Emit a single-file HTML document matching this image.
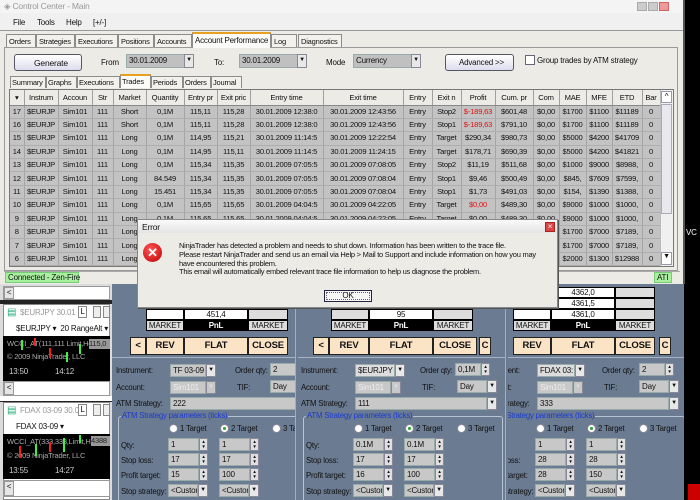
<!DOCTYPE html>
<html><head><meta charset="utf-8"><style>
*{margin:0;padding:0;box-sizing:border-box}
body{width:700px;height:500px;overflow:hidden;position:relative;background:#6b7b92;font-family:"Liberation Sans",sans-serif;font-size:8px;color:#111;letter-spacing:-0.2px}
.a{position:absolute}
.t{position:absolute;white-space:nowrap}
#main{left:0;top:0;width:685px;height:284px;background:#ecebe6;border-right:2px solid #555}
.tab{position:absolute;top:34px;height:13px;border:1px solid #8c8c8c;border-bottom:none;background:#f2f1ec;padding:2px 2px 0;font-size:7.5px;overflow:hidden;white-space:nowrap}
.stab{position:absolute;top:76px;height:12px;border:1px solid #8c8c8c;border-bottom:none;background:#f2f1ec;padding:1px 1px 0;font-size:7.5px;overflow:hidden;white-space:nowrap}
table{border-collapse:collapse;table-layout:fixed;position:absolute;left:10px;top:90px;font-size:7.6px}
td{height:13.4px;border-right:1px solid #a5a5a5;border-bottom:1px solid #aeaeae;background:#c3c3c3;white-space:nowrap;overflow:hidden;text-align:center;padding:0;line-height:12px}
th{height:15px;font-weight:normal;background:#ecebe6;border-right:1px solid #a0a0a0;border-bottom:1px solid #888;white-space:nowrap;overflow:hidden;text-align:center;font-size:7.6px}
.r{color:#e01010}
.pan{position:absolute;top:284px;height:216px;overflow:hidden}
.cell{position:absolute;height:11px;border:1px solid #000;text-align:center;font-size:8px;line-height:9px}
.btn{position:absolute;top:337px;height:18px;background:#fbe4c6;border:1px solid #222;text-align:center;font-weight:bold;font-size:9.5px;line-height:16px}
.lbl{position:absolute;color:#111;font-size:7.8px;white-space:nowrap}
.in{position:absolute;height:13px;background:#c8c8c8;border:1px solid #9aa;font-size:8px;padding-left:2px;line-height:11px;white-space:nowrap;overflow:hidden}
.dd{position:absolute;height:13px;width:10px;background:#e8e8e8;border:1px solid #889;font-size:6px;text-align:center;line-height:11px}
.sp{position:absolute;height:13px;width:9px;background:#e0e0e0;border:1px solid #889;font-size:4.5px;line-height:5px;text-align:center}
.rad{position:absolute;width:9px;height:9px;border-radius:50%;background:#fff;border:1px solid #889}
.win{position:absolute;left:3px;width:107px;background:#fff}
.chart{position:absolute;left:3px;width:107px;background:#000;overflow:hidden}
</style></head><body>

<div class="a" style="left:684px;top:0;width:16px;height:500px;background:#000"></div>
<div class="a" style="left:686px;top:228px;width:14px;height:12px;color:#fff;font-size:8px">VC</div>
<div class="a" style="left:688px;top:484px;width:12px;height:16px;background:#c00"></div>

<div id="main" class="a">
 <div class="a" style="left:0;top:0;width:683px;height:13px;background:#f4f4f4"></div>
 <div class="t" style="left:4px;top:1px;color:#999;font-size:8.5px">&#9672; Control Center - Main</div>
 <div class="a" style="left:637px;top:2px;width:10px;height:9px;background:#ccc;border:1px solid #aaa"></div>
 <div class="a" style="left:648px;top:2px;width:10px;height:9px;background:#ccc;border:1px solid #aaa"></div>
 <div class="a" style="left:659px;top:2px;width:10px;height:9px;background:#e99;border:1px solid #c66"></div>
 <div class="a" style="left:0;top:13px;width:683px;height:18px;background:#f0f0f0;border-bottom:1px solid #999"></div>
 <div class="t" style="left:13px;top:18px">File</div><div class="t" style="left:37px;top:18px">Tools</div><div class="t" style="left:66px;top:18px">Help</div><div class="t" style="left:93px;top:18px">[+/-]</div>
 <div class="a" style="left:4px;top:47px;width:674px;height:224px;background:#ecebe6;border:1px solid #999"></div>
 <div class="tab" style="left:6px;width:30px">Orders</div>
 <div class="tab" style="left:36px;width:39px">Strategies</div>
 <div class="tab" style="left:75px;width:43px">Executions</div>
 <div class="tab" style="left:118px;width:36px">Positions</div>
 <div class="tab" style="left:154px;width:38px">Accounts</div>
 <div class="tab" style="left:192px;top:32px;height:16px;width:79px;background:#fbfbf8;border-top:2px solid #e8a020;font-size:8px">Account Performance</div>
 <div class="tab" style="left:271px;width:26px">Log</div>
 <div class="tab" style="left:298px;width:44px">Diagnostics</div>
 <div class="a" style="left:14px;top:54px;width:68px;height:17px;border:1px solid #556;border-radius:3px;background:linear-gradient(#fff,#dde)"><div class="t" style="left:19px;top:3px;font-size:8.5px">Generate</div></div>
 <div class="t" style="left:101px;top:58px">From</div>
 <div class="in" style="left:126px;top:54px;width:60px;height:14px;background:#c0c0c0">30.01.2009</div><div class="dd" style="left:184px;top:54px;height:14px">&#9660;</div>
 <div class="t" style="left:214px;top:58px">To:</div>
 <div class="in" style="left:239px;top:54px;width:60px;height:14px;background:#c0c0c0">30.01.2009</div><div class="dd" style="left:297px;top:54px;height:14px">&#9660;</div>
 <div class="t" style="left:326px;top:58px">Mode</div>
 <div class="in" style="left:353px;top:54px;width:60px;height:14px;background:#c0c0c0">Currency</div><div class="dd" style="left:411px;top:54px;height:14px">&#9660;</div>
 <div class="a" style="left:445px;top:54px;width:69px;height:17px;border:1px solid #556;border-radius:3px;background:linear-gradient(#fff,#dde)"><div class="t" style="left:13px;top:3px;font-size:8px">Advanced &gt;&gt;</div></div>
 <div class="a" style="left:525px;top:55px;width:10px;height:10px;background:#fff;border:1px solid #667"></div>
 <div class="t" style="left:537px;top:56px">Group trades by ATM strategy</div>
 <div class="stab" style="left:10px;width:36px">Summary</div>
 <div class="stab" style="left:46px;width:31px">Graphs</div>
 <div class="stab" style="left:77px;width:43px">Executions</div>
 <div class="stab" style="left:120px;top:74px;height:14px;width:31px;background:#fbfbf8;border-top:2px solid #e8a020">Trades</div>
 <div class="stab" style="left:151px;width:32px">Periods</div>
 <div class="stab" style="left:183px;width:28px">Orders</div>
 <div class="stab" style="left:211px;width:31px">Journal</div>
 <div class="a" style="left:9px;top:89px;width:665px;height:178px;border:1px solid #777;background:#c3c3c3"></div>
 <table>
 <colgroup><col style="width:14px"><col style="width:34px"><col style="width:34px"><col style="width:21px"><col style="width:33px"><col style="width:38px"><col style="width:33px"><col style="width:33px"><col style="width:73px"><col style="width:80px"><col style="width:29px"><col style="width:29px"><col style="width:34px"><col style="width:38px"><col style="width:26px"><col style="width:27px"><col style="width:26px"><col style="width:30px"><col style="width:18px"></colgroup>
 <tr><th>&#9662;</th><th>Instrum</th><th>Accoun</th><th>Str</th><th>Market</th><th>Quantity</th><th>Entry pr</th><th>Exit pric</th><th>Entry time</th><th>Exit time</th><th>Entry</th><th>Exit n</th><th>Profit</th><th>Cum. pr</th><th>Com</th><th>MAE</th><th>MFE</th><th>ETD</th><th>Bar</th></tr>
 <tr><td>17</td><td>$EURJP</td><td>Sim101</td><td>111</td><td>Short</td><td>0,1M</td><td>115,11</td><td>115,28</td><td>30.01.2009 12:38:0</td><td>30.01.2009 12:43:56</td><td>Entry</td><td>Stop2</td><td class="r">$-189,63</td><td>$601,48</td><td>$0,00</td><td>$1700</td><td>$1100</td><td>$11189</td><td>0</td></tr>
 <tr><td>16</td><td>$EURJP</td><td>Sim101</td><td>111</td><td>Short</td><td>0,1M</td><td>115,11</td><td>115,28</td><td>30.01.2009 12:38:0</td><td>30.01.2009 12:43:56</td><td>Entry</td><td>Stop1</td><td class="r">$-189,63</td><td>$791,10</td><td>$0,00</td><td>$1700</td><td>$1100</td><td>$11189</td><td>0</td></tr>
 <tr><td>15</td><td>$EURJP</td><td>Sim101</td><td>111</td><td>Long</td><td>0,1M</td><td>114,95</td><td>115,21</td><td>30.01.2009 11:14:5</td><td>30.01.2009 12:22:54</td><td>Entry</td><td>Target</td><td>$290,34</td><td>$980,73</td><td>$0,00</td><td>$5000</td><td>$4200</td><td>$41709</td><td>0</td></tr>
 <tr><td>14</td><td>$EURJP</td><td>Sim101</td><td>111</td><td>Long</td><td>0,1M</td><td>114,95</td><td>115,11</td><td>30.01.2009 11:14:5</td><td>30.01.2009 11:24:15</td><td>Entry</td><td>Target</td><td>$178,71</td><td>$690,39</td><td>$0,00</td><td>$5000</td><td>$4200</td><td>$41821</td><td>0</td></tr>
 <tr><td>13</td><td>$EURJP</td><td>Sim101</td><td>111</td><td>Long</td><td>0,1M</td><td>115,34</td><td>115,35</td><td>30.01.2009 07:05:5</td><td>30.01.2009 07:08:05</td><td>Entry</td><td>Stop2</td><td>$11,19</td><td>$511,68</td><td>$0,00</td><td>$1000</td><td>$9000</td><td>$8988,</td><td>0</td></tr>
 <tr><td>12</td><td>$EURJP</td><td>Sim101</td><td>111</td><td>Long</td><td>84.549</td><td>115,34</td><td>115,35</td><td>30.01.2009 07:05:5</td><td>30.01.2009 07:08:04</td><td>Entry</td><td>Stop1</td><td>$9,46</td><td>$500,49</td><td>$0,00</td><td>$845,</td><td>$7609</td><td>$7599,</td><td>0</td></tr>
 <tr><td>11</td><td>$EURJP</td><td>Sim101</td><td>111</td><td>Long</td><td>15.451</td><td>115,34</td><td>115,35</td><td>30.01.2009 07:05:5</td><td>30.01.2009 07:08:04</td><td>Entry</td><td>Stop1</td><td>$1,73</td><td>$491,03</td><td>$0,00</td><td>$154,</td><td>$1390</td><td>$1388,</td><td>0</td></tr>
 <tr><td>10</td><td>$EURJP</td><td>Sim101</td><td>111</td><td>Long</td><td>0,1M</td><td>115,65</td><td>115,65</td><td>30.01.2009 04:04:5</td><td>30.01.2009 04:22:05</td><td>Entry</td><td>Target</td><td class="r">$0,00</td><td>$489,30</td><td>$0,00</td><td>$9000</td><td>$1000</td><td>$1000,</td><td>0</td></tr>
 <tr><td>9</td><td>$EURJP</td><td>Sim101</td><td>111</td><td>Long</td><td>0,1M</td><td>115,65</td><td>115,65</td><td>30.01.2009 04:04:5</td><td>30.01.2009 04:22:05</td><td>Entry</td><td>Target</td><td>$0,00</td><td>$489,30</td><td>$0,00</td><td>$9000</td><td>$1000</td><td>$1000,</td><td>0</td></tr>
 <tr><td>8</td><td>$EURJP</td><td>Sim101</td><td>111</td><td>Long</td><td>0,1M</td><td>115,65</td><td>115,65</td><td>30.01.2009 04:04:5</td><td>30.01.2009 04:22:05</td><td>Entry</td><td>Target</td><td>$0,00</td><td>$489,30</td><td>$0,00</td><td>$1700</td><td>$7000</td><td>$7189,</td><td>0</td></tr>
 <tr><td>7</td><td>$EURJP</td><td>Sim101</td><td>111</td><td>Long</td><td>0,1M</td><td>115,65</td><td>115,65</td><td>30.01.2009 04:04:5</td><td>30.01.2009 04:22:05</td><td>Entry</td><td>Target</td><td>$0,00</td><td>$489,30</td><td>$0,00</td><td>$1700</td><td>$7000</td><td>$7189,</td><td>0</td></tr>
 <tr><td>6</td><td>$EURJP</td><td>Sim101</td><td>111</td><td>Long</td><td>0,1M</td><td>115,65</td><td>115,65</td><td>30.01.2009 04:04:5</td><td>30.01.2009 04:22:05</td><td>Entry</td><td>Target</td><td>$0,00</td><td>$489,30</td><td>$0,00</td><td>$2000</td><td>$1300</td><td>$12988</td><td>0</td></tr>
 </table>
 <div class="a" style="left:660px;top:90px;width:13px;height:176px;background:#f0f0f0;border-left:1px solid #bbb"></div>
 <div class="a" style="left:661px;top:91px;width:11px;height:12px;background:#fff;border:1px solid #99a;font-size:8px;text-align:center">^</div>
 <div class="a" style="left:661px;top:104px;width:11px;height:110px;background:#e8e8ee;border:1px solid #aab"></div>
 <div class="a" style="left:661px;top:252px;width:11px;height:13px;background:#fff;border:1px solid #99a;font-size:7px;text-align:center">&#9660;</div>
 <div class="a" style="left:4px;top:271px;width:676px;height:12px;background:#ecebe6;border-top:1px solid #aaa"></div>
 <div class="t" style="left:5px;top:272px;width:74px;height:11px;background:#a8f0a0;border:1px solid #7c7;padding-left:2px;font-size:8px">Connected - Zen-Fire</div>
 <div class="t" style="left:654px;top:272px;width:18px;height:11px;background:#a8f0a0;border:1px solid #7c7;font-size:8px;padding-left:2px">ATI</div>
</div>

<!-- left windows -->
<div class="a" style="left:0;top:284px;width:112px;height:216px;background:#dcdcdc"></div>
<div class="a" style="left:3px;top:286px;width:107px;height:14px;background:#fff;border:1px solid #999"></div>
<div class="a" style="left:4px;top:287px;width:10px;height:12px;background:#e6e6e6;border:1px solid #999;font-size:8px;text-align:center">&lt;</div>
<div class="a" style="left:0;top:300px;width:112px;height:4px;background:#222"></div>
<div class="win" style="top:304px;height:92px;border:1px solid #888"></div>
<div class="t" style="left:7px;top:307px;color:#2a7;font-size:10px">&#9636;</div>
<div class="t" style="left:20px;top:308px;color:#999">$EURJPY 30.01</div>
<div class="a" style="left:78px;top:306px;width:9px;height:12px;border:1px solid #888;font-size:8px;text-align:center;background:#fff">L</div>
<div class="a" style="left:93px;top:306px;width:8px;height:12px;border:1px solid #888;background:#eee"></div>
<div class="a" style="left:103px;top:306px;width:7px;height:12px;border:1px solid #888;background:#eee"></div>
<div class="t" style="left:16px;top:324px">$EURJPY ▾ &nbsp;20 RangeAlt ▾</div>
<div class="chart" style="top:336px;height:45px">
 <div class="t" style="left:4px;top:3px;color:#aaa;font-size:7.5px">WCCI_AT(111,111 Limit,Hedge)</div>
 <div class="t" style="left:4px;top:16px;color:#aaa;font-size:7.5px">© 2009 NinjaTrader, LLC</div>
 <div class="t" style="left:6px;top:31px;color:#ccc">13:50</div><div class="t" style="left:52px;top:31px;color:#ccc">14:12</div>
 <div class="a" style="left:18px;top:4px;width:2px;height:10px;background:#4e4"></div>
 <div class="a" style="left:31px;top:2px;width:2px;height:8px;background:#e22"></div>
 <div class="a" style="left:46px;top:12px;width:2px;height:10px;background:#e22"></div>
 <div class="a" style="left:63px;top:16px;width:2px;height:10px;background:#4e4"></div>
 <div class="a" style="left:76px;top:8px;width:2px;height:10px;background:#4e4"></div>
 <div class="a" style="left:86px;top:3px;width:24px;height:10px;background:#999;color:#222;font-size:7.5px">115,0</div>
</div>
<div class="a" style="left:3px;top:381px;width:107px;height:15px;background:#fff;border:1px solid #999"></div>
<div class="a" style="left:4px;top:382px;width:10px;height:13px;background:#e6e6e6;border:1px solid #999;font-size:8px;text-align:center">&lt;</div>
<div class="a" style="left:0;top:396px;width:112px;height:6px;background:#fff;border-bottom:1px solid #222"></div>
<div class="win" style="top:402px;height:98px;border:1px solid #888"></div>
<div class="t" style="left:7px;top:405px;color:#2a7;font-size:10px">&#9636;</div>
<div class="t" style="left:20px;top:406px;color:#999">FDAX 03-09 30.0</div>
<div class="a" style="left:78px;top:404px;width:9px;height:12px;border:1px solid #888;font-size:8px;text-align:center;background:#fff">L</div>
<div class="a" style="left:93px;top:404px;width:8px;height:12px;border:1px solid #888;background:#eee"></div>
<div class="a" style="left:103px;top:404px;width:7px;height:12px;border:1px solid #888;background:#eee"></div>
<div class="t" style="left:16px;top:422px">FDAX 03-09 ▾</div>
<div class="chart" style="top:434px;height:45px">
 <div class="t" style="left:4px;top:3px;color:#aaa;font-size:7.5px">WCCI_AT(333,333,Limit,Hedge)</div>
 <div class="t" style="left:4px;top:17px;color:#aaa;font-size:7.5px">© 2009 NinjaTrader, LLC</div>
 <div class="t" style="left:6px;top:32px;color:#ccc">13:55</div><div class="t" style="left:52px;top:32px;color:#ccc">14:27</div>
 <div class="a" style="left:16px;top:12px;width:2px;height:12px;background:#e22"></div>
 <div class="a" style="left:32px;top:10px;width:2px;height:12px;background:#4e4"></div>
 <div class="a" style="left:46px;top:8px;width:2px;height:10px;background:#e22"></div>
 <div class="a" style="left:60px;top:4px;width:2px;height:14px;background:#4e4"></div>
 <div class="a" style="left:76px;top:1px;width:2px;height:8px;background:#4e4"></div>
 <div class="a" style="left:88px;top:2px;width:22px;height:10px;background:#999;color:#222;font-size:7.5px">4388</div>
</div>
<div class="a" style="left:3px;top:480px;width:107px;height:17px;background:#fff;border:1px solid #999"></div>
<div class="a" style="left:4px;top:481px;width:10px;height:15px;background:#e6e6e6;border:1px solid #999;font-size:8px;text-align:center">&lt;</div>

<!-- panels -->
<div class="pan" style="left:112px;width:184px;border-right:1px solid #aab">
 <div style="position:absolute;left:-112px;top:-284px;width:700px;height:500px">
  <div class="cell" style="left:146px;top:309px;width:38px;background:#fff">&nbsp;</div>
  <div class="cell" style="left:184px;top:309px;width:64px;background:#fff">451,4</div>
  <div class="cell" style="left:248px;top:309px;width:40px;background:#ddd"></div>
  <div class="cell" style="left:146px;top:320px;width:38px;background:#ddd">MARKET</div>
  <div class="cell" style="left:184px;top:320px;width:64px;background:#000;color:#fff;font-weight:bold">PnL</div>
  <div class="cell" style="left:248px;top:320px;width:40px;background:#ddd">MARKET</div>
  <div class="btn" style="left:130px;width:16px">&lt;</div>
  <div class="btn" style="left:146px;width:38px">REV</div>
  <div class="btn" style="left:184px;width:64px">FLAT</div>
  <div class="btn" style="left:248px;width:40px">CLOSE</div>
  <div class="a" style="left:112px;top:357px;width:190px;height:1px;background:#a8b4c4"></div>
  <div class="lbl" style="left:116px;top:366px">Instrument:</div>
  <div class="in" style="left:170px;top:364px;width:36px">TF 03-09</div><div class="dd" style="left:206px;top:364px">&#9660;</div>
  <div class="lbl" style="left:235px;top:366px">Order qty:</div>
  <div class="in" style="left:270px;top:363px;width:30px">2</div>
  <div class="lbl" style="left:116px;top:383px">Account:</div>
  <div class="in" style="left:170px;top:381px;width:36px;color:#eee">Sim101</div><div class="dd" style="left:206px;top:381px;background:#c8c8c8;color:#ddd">&#9660;</div>
  <div class="lbl" style="left:237px;top:383px">TIF:</div>
  <div class="in" style="left:270px;top:380px;width:30px">Day</div>
  <div class="lbl" style="left:116px;top:399px">ATM Strategy:</div>
  <div class="in" style="left:170px;top:397px;width:130px">222</div>
  <div class="a" style="left:118px;top:416px;width:180px;height:90px;border:1px solid #b8c4d4;border-radius:3px"></div>
  <div class="lbl" style="left:121px;top:411px;color:#1a3ad0;background:#6b7b92;padding:0 1px">ATM Strategy parameters (ticks)</div>
  <div class="rad" style="left:169px;top:424px"></div><div class="lbl" style="left:180px;top:424px">1 Target</div>
  <div class="rad" style="left:220px;top:424px;background:radial-gradient(#3a3 30%,#fff 35%)"></div><div class="lbl" style="left:231px;top:424px">2 Target</div>
  <div class="rad" style="left:272px;top:424px"></div><div class="lbl" style="left:283px;top:424px">3 Ta</div>
  <div class="lbl" style="left:121px;top:441px">Qty:</div>
  <div class="lbl" style="left:121px;top:456px">Stop loss:</div>
  <div class="lbl" style="left:121px;top:471px">Profit target:</div>
  <div class="lbl" style="left:121px;top:487px">Stop strategy:</div>
  <div class="in" style="left:168px;top:438px;width:31px">1</div><div class="sp" style="left:199px;top:438px">▲<br>▼</div>
  <div class="in" style="left:219px;top:438px;width:31px">1</div><div class="sp" style="left:250px;top:438px">▲<br>▼</div>
  <div class="in" style="left:168px;top:453px;width:31px">17</div><div class="sp" style="left:199px;top:453px">▲<br>▼</div>
  <div class="in" style="left:219px;top:453px;width:31px">17</div><div class="sp" style="left:250px;top:453px">▲<br>▼</div>
  <div class="in" style="left:168px;top:468px;width:31px">15</div><div class="sp" style="left:199px;top:468px">▲<br>▼</div>
  <div class="in" style="left:219px;top:468px;width:31px">100</div><div class="sp" style="left:250px;top:468px">▲<br>▼</div>
  <div class="in" style="left:168px;top:484px;width:30px">&lt;Custom</div><div class="dd" style="left:198px;top:484px">&#9660;</div>
  <div class="in" style="left:219px;top:484px;width:30px">&lt;Custom</div><div class="dd" style="left:249px;top:484px">&#9660;</div>
 </div>
</div>

<div class="pan" style="left:298px;width:208px;border-right:1px solid #aab">
 <div style="position:absolute;left:-113px;top:-284px;width:700px;height:500px">
  <div class="cell" style="left:146px;top:309px;width:38px;background:#ddd"></div>
  <div class="cell" style="left:184px;top:309px;width:64px;background:#fff">95</div>
  <div class="cell" style="left:248px;top:309px;width:40px;background:#ddd"></div>
  <div class="cell" style="left:146px;top:320px;width:38px;background:#ddd">MARKET</div>
  <div class="cell" style="left:184px;top:320px;width:64px;background:#000;color:#fff;font-weight:bold">PnL</div>
  <div class="cell" style="left:248px;top:320px;width:40px;background:#ddd">MARKET</div>
  <div class="btn" style="left:128px;width:16px">&lt;</div>
  <div class="btn" style="left:144px;width:40px">REV</div>
  <div class="btn" style="left:184px;width:64px">FLAT</div>
  <div class="btn" style="left:248px;width:44px">CLOSE</div>
  <div class="btn" style="left:294px;width:12px">C</div>
  <div class="a" style="left:112px;top:357px;width:210px;height:1px;background:#a8b4c4"></div>
  <div class="lbl" style="left:116px;top:366px">Instrument:</div>
  <div class="in" style="left:170px;top:364px;width:40px;background:#ddd">$EURJPY</div><div class="dd" style="left:210px;top:364px">&#9660;</div>
  <div class="lbl" style="left:235px;top:366px">Order qty:</div>
  <div class="in" style="left:270px;top:363px;width:26px">0,1M</div><div class="sp" style="left:296px;top:363px">▲<br>▼</div>
  <div class="lbl" style="left:116px;top:383px">Account:</div>
  <div class="in" style="left:170px;top:381px;width:36px;color:#eee">Sim101</div><div class="dd" style="left:206px;top:381px;background:#c8c8c8;color:#ddd">&#9660;</div>
  <div class="lbl" style="left:237px;top:383px">TIF:</div>
  <div class="in" style="left:272px;top:380px;width:30px">Day</div><div class="dd" style="left:302px;top:380px">&#9660;</div>
  <div class="lbl" style="left:116px;top:399px">ATM Strategy:</div>
  <div class="in" style="left:170px;top:397px;width:132px">111</div><div class="dd" style="left:302px;top:397px">&#9660;</div>
  <div class="a" style="left:118px;top:416px;width:200px;height:90px;border:1px solid #b8c4d4;border-radius:3px"></div>
  <div class="lbl" style="left:121px;top:411px;color:#1a3ad0;background:#6b7b92;padding:0 1px">ATM Strategy parameters (ticks)</div>
  <div class="rad" style="left:169px;top:424px"></div><div class="lbl" style="left:180px;top:424px">1 Target</div>
  <div class="rad" style="left:220px;top:424px;background:radial-gradient(#3a3 30%,#fff 35%)"></div><div class="lbl" style="left:231px;top:424px">2 Target</div>
  <div class="rad" style="left:272px;top:424px"></div><div class="lbl" style="left:283px;top:424px">3 Target</div>
  <div class="lbl" style="left:121px;top:441px">Qty:</div>
  <div class="lbl" style="left:121px;top:456px">Stop loss:</div>
  <div class="lbl" style="left:121px;top:471px">Profit target:</div>
  <div class="lbl" style="left:121px;top:487px">Stop strategy:</div>
  <div class="in" style="left:168px;top:438px;width:31px">0.1M</div><div class="sp" style="left:199px;top:438px">▲<br>▼</div>
  <div class="in" style="left:219px;top:438px;width:31px">0.1M</div><div class="sp" style="left:250px;top:438px">▲<br>▼</div>
  <div class="in" style="left:168px;top:453px;width:31px">17</div><div class="sp" style="left:199px;top:453px">▲<br>▼</div>
  <div class="in" style="left:219px;top:453px;width:31px">17</div><div class="sp" style="left:250px;top:453px">▲<br>▼</div>
  <div class="in" style="left:168px;top:468px;width:31px">16</div><div class="sp" style="left:199px;top:468px">▲<br>▼</div>
  <div class="in" style="left:219px;top:468px;width:31px">100</div><div class="sp" style="left:250px;top:468px">▲<br>▼</div>
  <div class="in" style="left:168px;top:484px;width:30px">&lt;Custom</div><div class="dd" style="left:198px;top:484px">&#9660;</div>
  <div class="in" style="left:219px;top:484px;width:30px">&lt;Custom</div><div class="dd" style="left:249px;top:484px">&#9660;</div>
 </div>
</div>

<div class="pan" style="left:508px;width:176px">
 <div style="position:absolute;left:-141px;top:-284px;width:700px;height:500px">
  <div class="cell" style="left:146px;top:287px;width:38px;background:#fff"></div><div class="cell" style="left:184px;top:287px;width:64px;background:#fff">4362,0</div><div class="cell" style="left:248px;top:287px;width:40px;background:#ddd"></div>
  <div class="cell" style="left:146px;top:298px;width:38px;background:#fff"></div><div class="cell" style="left:184px;top:298px;width:64px;background:#fff">4361,5</div><div class="cell" style="left:248px;top:298px;width:40px;background:#ddd"></div>
  <div class="cell" style="left:146px;top:309px;width:38px;background:#fff"></div><div class="cell" style="left:184px;top:309px;width:64px;background:#fff">4361,0</div><div class="cell" style="left:248px;top:309px;width:40px;background:#ddd"></div>
  <div class="cell" style="left:146px;top:320px;width:38px;background:#ddd">MARKET</div>
  <div class="cell" style="left:184px;top:320px;width:64px;background:#000;color:#fff;font-weight:bold">PnL</div>
  <div class="cell" style="left:248px;top:320px;width:40px;background:#ddd">MARKET</div>
  <div class="btn" style="left:146px;width:38px">REV</div>
  <div class="btn" style="left:184px;width:64px">FLAT</div>
  <div class="btn" style="left:248px;width:40px">CLOSE</div>
  <div class="btn" style="left:292px;width:12px">C</div>
  <div class="a" style="left:112px;top:357px;width:210px;height:1px;background:#a8b4c4"></div>
  <div class="lbl" style="left:116px;top:366px">Instrument:</div>
  <div class="in" style="left:170px;top:364px;width:38px;background:#ddd">FDAX 03:</div><div class="dd" style="left:208px;top:364px">&#9660;</div>
  <div class="lbl" style="left:235px;top:366px">Order qty:</div>
  <div class="in" style="left:272px;top:363px;width:26px">2</div><div class="sp" style="left:298px;top:363px">▲<br>▼</div>
  <div class="lbl" style="left:116px;top:383px">Account:</div>
  <div class="in" style="left:170px;top:381px;width:36px;color:#eee">Sim101</div><div class="dd" style="left:206px;top:381px;background:#c8c8c8;color:#ddd">&#9660;</div>
  <div class="lbl" style="left:237px;top:383px">TIF:</div>
  <div class="in" style="left:272px;top:380px;width:30px">Day</div><div class="dd" style="left:302px;top:380px">&#9660;</div>
  <div class="lbl" style="left:116px;top:399px">ATM Strategy:</div>
  <div class="in" style="left:170px;top:397px;width:132px">333</div><div class="dd" style="left:302px;top:397px">&#9660;</div>
  <div class="a" style="left:118px;top:416px;width:200px;height:90px;border:1px solid #b8c4d4;border-radius:3px"></div>
  <div class="lbl" style="left:121px;top:411px;color:#1a3ad0;background:#6b7b92;padding:0 1px">ATM Strategy parameters (ticks)</div>
  <div class="rad" style="left:169px;top:424px"></div><div class="lbl" style="left:180px;top:424px">1 Target</div>
  <div class="rad" style="left:220px;top:424px;background:radial-gradient(#3a3 30%,#fff 35%)"></div><div class="lbl" style="left:231px;top:424px">2 Target</div>
  <div class="rad" style="left:272px;top:424px"></div><div class="lbl" style="left:283px;top:424px">3 Target</div>
  <div class="lbl" style="left:121px;top:441px">Qty:</div>
  <div class="lbl" style="left:121px;top:456px">Stop loss:</div>
  <div class="lbl" style="left:121px;top:471px">Profit target:</div>
  <div class="lbl" style="left:121px;top:487px">Stop strategy:</div>
  <div class="in" style="left:168px;top:438px;width:31px">1</div><div class="sp" style="left:199px;top:438px">▲<br>▼</div>
  <div class="in" style="left:219px;top:438px;width:31px">1</div><div class="sp" style="left:250px;top:438px">▲<br>▼</div>
  <div class="in" style="left:168px;top:453px;width:31px">28</div><div class="sp" style="left:199px;top:453px">▲<br>▼</div>
  <div class="in" style="left:219px;top:453px;width:31px">28</div><div class="sp" style="left:250px;top:453px">▲<br>▼</div>
  <div class="in" style="left:168px;top:468px;width:31px">28</div><div class="sp" style="left:199px;top:468px">▲<br>▼</div>
  <div class="in" style="left:219px;top:468px;width:31px">150</div><div class="sp" style="left:250px;top:468px">▲<br>▼</div>
  <div class="in" style="left:168px;top:484px;width:30px">&lt;Custom</div><div class="dd" style="left:198px;top:484px">&#9660;</div>
  <div class="in" style="left:219px;top:484px;width:30px">&lt;Custom</div><div class="dd" style="left:249px;top:484px">&#9660;</div>
 </div>
</div>

<!-- error dialog -->
<div class="a" style="left:137px;top:219px;width:421px;height:89px;background:#ecebe6;border:1px solid #888;box-shadow:1px 1px 0 #555">
 <div class="a" style="left:0;top:0;width:419px;height:13px;background:linear-gradient(#fafafa,#e4e4e4)"></div>
 <div class="t" style="left:4px;top:2px;font-size:8.5px">Error</div>
 <div class="a" style="left:407px;top:2px;width:10px;height:10px;background:#d44;border:1px solid #a22;color:#fff;font-size:8px;line-height:8px;text-align:center">×</div>
 <div class="a" style="left:5px;top:23px;width:19px;height:19px;border-radius:50%;background:radial-gradient(circle at 40% 35%,#f55,#b00);color:#fff;font-weight:bold;font-size:13px;line-height:19px;text-align:center">✕</div>
 <div class="t" style="left:41px;top:22px;font-size:7.5px;line-height:8.8px;letter-spacing:-0.25px">NinjaTrader has detected a problem and needs to shut down. Information has been written to the trace file.<br>Please restart NinjaTrader and send us an email via Help &gt; Mail to Support and include information on how you may<br>have encountered this problem.<br>This email will automatically embed relevant trace file information to help us diagnose the problem.</div>
 <div class="a" style="left:186px;top:70px;width:48px;height:12px;border:1px solid #224;background:#f6f6f6;outline:1px dotted #666;outline-offset:-3px;text-align:center;font-size:8px;line-height:10px">OK</div>
</div>
</body></html>
